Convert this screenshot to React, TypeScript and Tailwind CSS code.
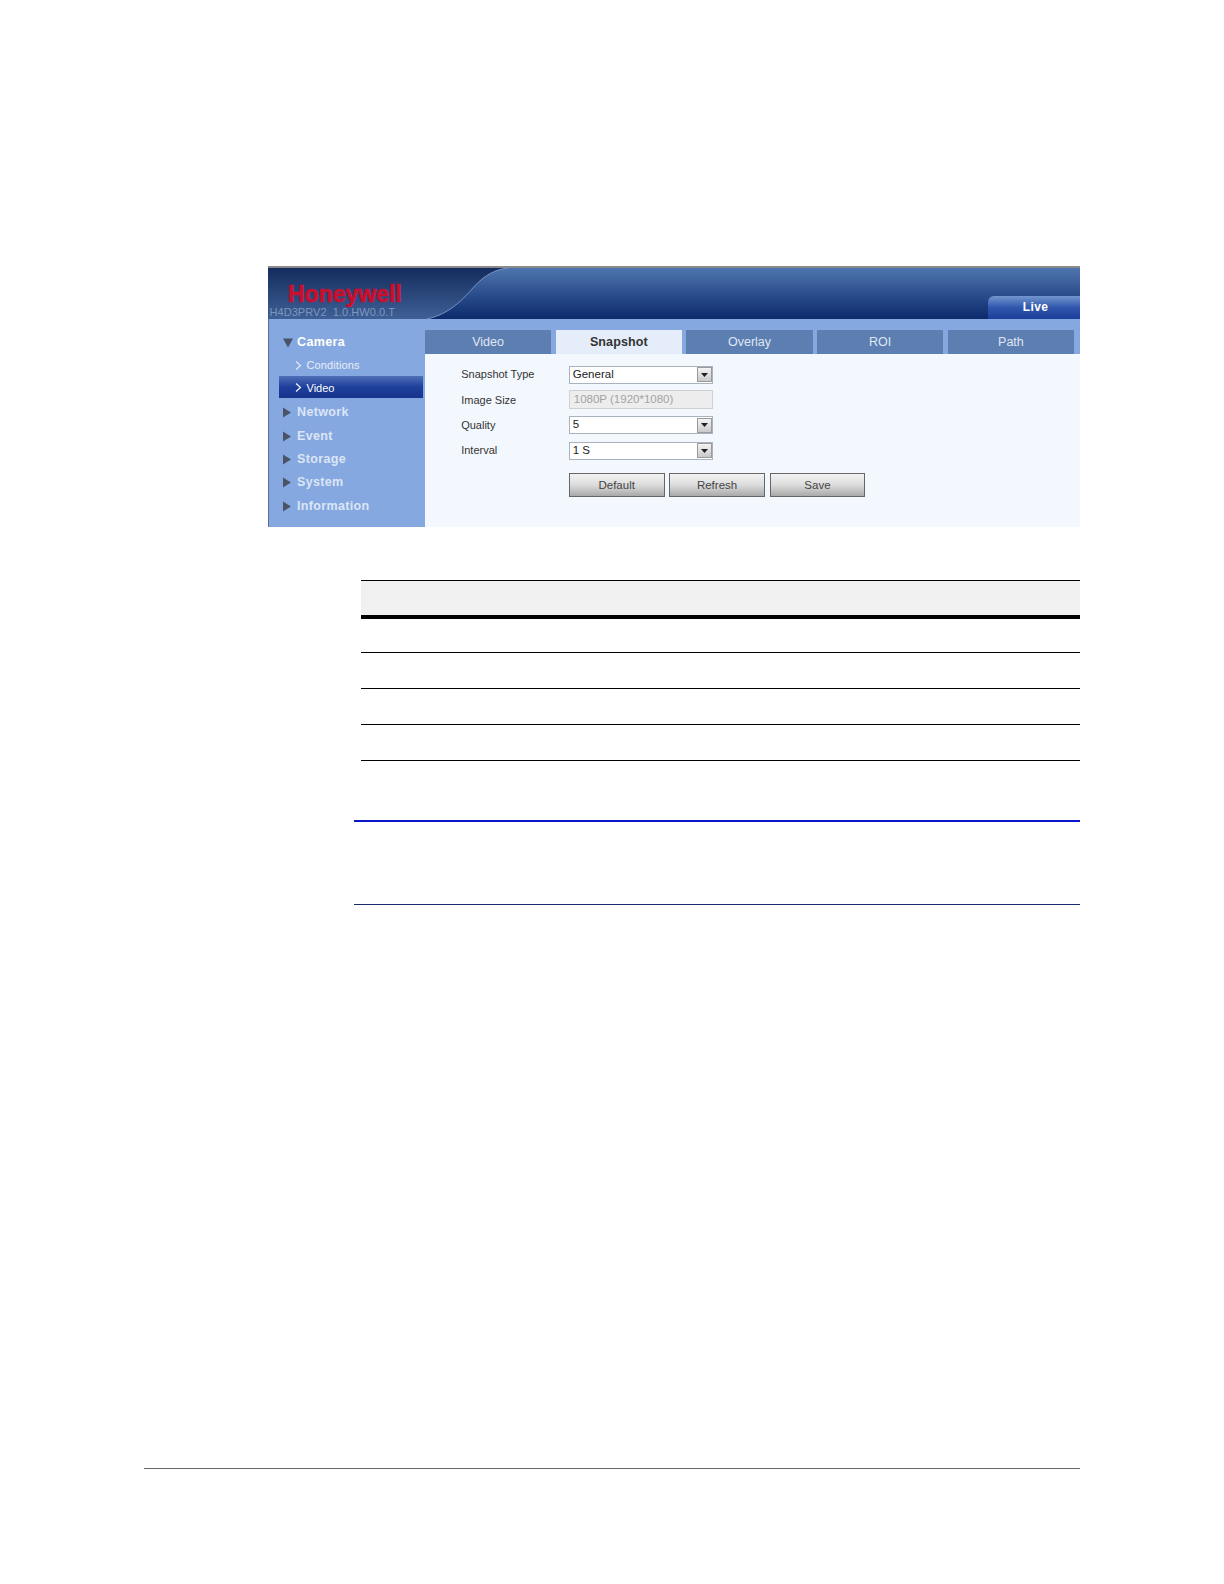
const MENU_TOP = ['Network', 'Event', 'Storage', 'System', 'Information']
const TABS = ['Video', 'Snapshot', 'Overlay', 'ROI', 'Path']
const FONT = "font-['Liberation_Sans',Arial,sans-serif]"

function Triangle({ down }: { down?: boolean }) {
  return (
    <svg width="10" height="11" viewBox="0 0 10 11" className="shrink-0">
      <path d={down ? 'M0 1.5h10L5 10.5z' : 'M0 0.5l8 5-8 5z'} fill="#4a5468" />
    </svg>
  )
}

function Chevron() {
  return (
    <svg width="7" height="9" viewBox="0 0 7 9" className="shrink-0">
      <path d="M1 .5l4.5 4-4.5 4" fill="none" stroke="currentColor" strokeWidth="1.1" />
    </svg>
  )
}

function MenuRow({ label, down, light }: { label: string; down?: boolean; light?: boolean }) {
  return (
    <div className="flex h-[23.4px] items-center pl-[13.5px]">
      <Triangle down={down} />
      <span className={`ml-[4.5px] text-[12.5px] font-bold tracking-[0.35px] ${light ? 'text-white' : 'text-[#dbe5f6]'}`}>
        {label}
      </span>
    </div>
  )
}

function Select({ value }: { value: string }) {
  return (
    <div className="flex h-[18px] w-[144.5px] items-center justify-between border border-[#a9b2bd] bg-white pl-[3px] text-[11.5px] leading-none text-[#222]">
      <span>{value}</span>
      <span className="flex h-[15px] w-[15px] items-center justify-center border border-[#9a9a9a] bg-gradient-to-b from-[#f4f4f4] to-[#c9c9c9]">
        <svg width="7" height="4" viewBox="0 0 7 4">
          <path d="M0 0h7L3.5 4z" fill="#222" />
        </svg>
      </span>
    </div>
  )
}

function FormRow({ label, children }: { label: string; children: React.ReactNode }) {
  return (
    <div className="flex h-[25.3px] items-center">
      <span className="w-[107.6px] text-[11px] text-[#333]">{label}</span>
      {children}
    </div>
  )
}

function GrayButton({ label }: { label: string }) {
  return (
    <div className="flex h-[24px] w-[95.8px] items-center justify-center border border-[#666] bg-gradient-to-b from-[#f3f3f3] via-[#dcdcdc] to-[#a9a9a9] text-[11.5px] text-[#444]">
      {label}
    </div>
  )
}

export default function App() {
  return (
    <div className={`${FONT} h-[1584px] w-[1224px] overflow-hidden bg-white pt-[266px]`}>
      <div className="ml-[268px] mr-[144px]">
        {/* header */}
        <div className="relative flex h-[53px] flex-col justify-end overflow-hidden border-t-2 border-[#8a8a8a] bg-gradient-to-b from-[#4f75ae] to-[#0c2a6c]">
          <svg className="absolute inset-0 h-full w-full" viewBox="0 0 812 51" preserveAspectRatio="none">
            <defs>
              <linearGradient id="leftFade" x1="0" y1="0" x2="0" y2="1">
                <stop offset="0" stopColor="#142c5e" />
                <stop offset="1" stopColor="#3f6096" />
              </linearGradient>
            </defs>
            <path d="M0 0H240C222 2 212 12 204 21S182 46 159 51H0z" fill="url(#leftFade)" />
            <path d="M159 51C182 46 196 30 204 21S222 2 240 0" fill="none" stroke="#86a3d0" strokeWidth="0.8" />
          </svg>
          <div className="relative flex items-end justify-between">
            <div className="flex flex-col">
              <span className="ml-[20px] text-[23px] font-bold leading-[24px] text-[#c8102e] [-webkit-text-stroke:0.7px_#c8102e]">Honeywell</span>
              <span className="ml-[1.5px] text-[11px] tracking-[0.05px] leading-[13px] text-[#7e97bf]">H4D3PRV2&nbsp; 1.0.HW0.0.T</span>
            </div>
            <div className="flex h-[23px] w-[92px] items-center justify-center rounded-tl-[6px] bg-gradient-to-b from-[#7496cf] via-[#3156ad] to-[#1c3f9a] pb-[2px] pl-[3px] text-[12px] font-bold tracking-[0.4px] text-white">
              Live
            </div>
          </div>
        </div>

        <div className="flex h-[208px]">
          {/* sidebar */}
          <div className="w-[157px] shrink-0 border-l border-[#5c6f8f] bg-[#86a8e0] pt-[12px]">
            <MenuRow label="Camera" down light />
            <div className="flex h-[22px] items-center gap-[5px] pl-[25.5px] text-[11px] tracking-[0.1px] text-[#e6edf9]">
              <Chevron />
              Conditions
            </div>
            <div className="ml-[10px] mr-[2px] mb-[2.6px] flex h-[22px] items-center gap-[5px] bg-gradient-to-b from-[#4f6fb8] via-[#1f3f9c] to-[#17358f] pl-[15.5px] pt-[1px] text-[11px] text-white">
              <Chevron />
              Video
            </div>
            {MENU_TOP.map((label) => (
              <MenuRow key={label} label={label} />
            ))}
          </div>

          {/* content */}
          <div className="flex min-w-0 flex-1 flex-col bg-[#f3f8fe]">
            <div className="flex h-[35px] items-end gap-[4.5px] bg-[#86a8e0] pr-[6px]">
              {TABS.map((tab) => (
                <div
                  key={tab}
                  className={`flex h-[24px] flex-1 items-center justify-center text-[12.5px] ${
                    tab === 'Snapshot'
                      ? 'bg-[#e4edf9] font-bold tracking-[0.1px] text-[#333]'
                      : 'bg-[#5d7eb0] text-[#dfe7f4]'
                  }`}
                >
                  {tab}
                </div>
              ))}
            </div>
            <div className="pl-[36.2px] pt-[8px]">
              <FormRow label="Snapshot Type">
                <Select value="General" />
              </FormRow>
              <FormRow label="Image Size">
                <div className="flex h-[19px] w-[144.5px] items-center border border-[#d0d0d0] bg-[#ededed] pl-[4px] text-[11.5px] text-[#a3a3a3]">
                  1080P (1920*1080)
                </div>
              </FormRow>
              <FormRow label="Quality">
                <Select value="5" />
              </FormRow>
              <FormRow label="Interval">
                <Select value="1 S" />
              </FormRow>
              <div className="ml-[107.6px] mt-[10px] flex gap-[4.6px]">
                <GrayButton label="Default" />
                <GrayButton label="Refresh" />
                <GrayButton label="Save" />
              </div>
            </div>
          </div>
        </div>
      </div>

      {/* table */}
      <div className="ml-[361px] mr-[144px] mt-[53px]">
        <div className="h-[39px] border-t border-b-4 border-t-black border-b-black bg-[#f0f0f0]" />
        <div className="h-[34px] border-b border-black" />
        <div className="h-[36px] border-b border-black" />
        <div className="h-[36px] border-b border-black" />
        <div className="h-[36px] border-b border-black" />
      </div>

      {/* note */}
      <div className="ml-[354px] mr-[144px] mt-[59px] h-[85px] border-t-2 border-b border-t-[#0a14c8] border-b-[#1a2a6c]" />

      {/* footer rule */}
      <div className="ml-[143.5px] mr-[144px] mt-[563.3px] border-t border-[#666]" />
    </div>
  )
}
